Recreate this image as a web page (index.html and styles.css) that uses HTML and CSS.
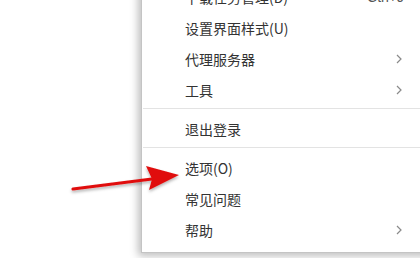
FILE: index.html
```html
<!DOCTYPE html>
<html lang="zh-CN">
<head>
  <meta charset="UTF-8" />
  <title>菜单</title>
  <link rel="stylesheet" href="styles.css">
</head>
<body>
  <div class="stage">
    <ul class="menu">
      <li class="item">
        <span>下载任务管理(D)</span>
        <span class="shortcut">Ctrl+J</span>
      </li>
      <li class="item"><span>设置界面样式(U)</span></li>
      <li class="item">
        <span>代理服务器</span>
        <svg class="chev" width="6" height="10" viewBox="0 0 6 10"><polyline points="1,1 5,5 1,9" /></svg>
      </li>
      <li class="item">
        <span>工具</span>
        <svg class="chev" width="6" height="10" viewBox="0 0 6 10"><polyline points="1,1 5,5 1,9" /></svg>
      </li>
      <li class="sep"></li>
      <li class="item"><span>退出登录</span></li>
      <li class="sep"></li>
      <li class="item"><span>选项(O)</span></li>
      <li class="item"><span>常见问题</span></li>
      <li class="item">
        <span>帮助</span>
        <svg class="chev" width="6" height="10" viewBox="0 0 6 10"><polyline points="1,1 5,5 1,9" /></svg>
      </li>
    </ul>

    <!-- red pointer arrow -->
    <svg class="arrow" width="420" height="258" viewBox="0 0 420 258">
      <defs>
        <filter id="soft" x="-20%" y="-50%" width="140%" height="200%">
          <feDropShadow dx="0" dy="2" stdDeviation="1.5" flood-color="#000" flood-opacity="0.3"/>
        </filter>
      </defs>
      <g filter="url(#soft)">
        <line x1="73" y1="189" x2="152" y2="179" stroke="#e01010" stroke-width="3.2" stroke-linecap="round"/>
        <polygon points="179,175 146,166 152,179 149,190" fill="#e01010"/>
      </g>
    </svg>
  </div>
</body>
</html>
```

FILE: styles.css
```css
html {
  overflow: hidden;
}

html, body {
  margin: 0;
  padding: 0;
  background: #fff;
}

body {
  font-family: "Noto Sans CJK SC", "Noto Sans", sans-serif;
  font-size: 14px;
  color: #333;
}

.stage {
  position: relative;
  display: flow-root;
  width: 420px;
  height: 258px;
}

.menu {
  list-style: none;
  margin: -20px 0 0 141px;
  padding: 0 0 7px 0;
  width: 290px;
  background: #fff;
  border: 1px solid #c4c4c4;
  box-shadow: -3px 3px 8px rgba(0, 0, 0, 0.26);
}

.item {
  display: flex;
  align-items: center;
  justify-content: space-between;
  height: 31px;
  padding: 0 30px 0 43px;
  line-height: 1;
}

.shortcut {
  font-family: "Liberation Sans", Arial, sans-serif;
  color: #555;
  margin-right: -2px;
}

.chev polyline {
  fill: none;
  stroke: #8a8a8a;
  stroke-width: 1.2;
}

.sep {
  height: 1px;
  margin: 3px 0 4px 1px;
  background: #e3e3e3;
}

.arrow {
  position: absolute;
  left: 0;
  top: 0;
  pointer-events: none;
}
```
